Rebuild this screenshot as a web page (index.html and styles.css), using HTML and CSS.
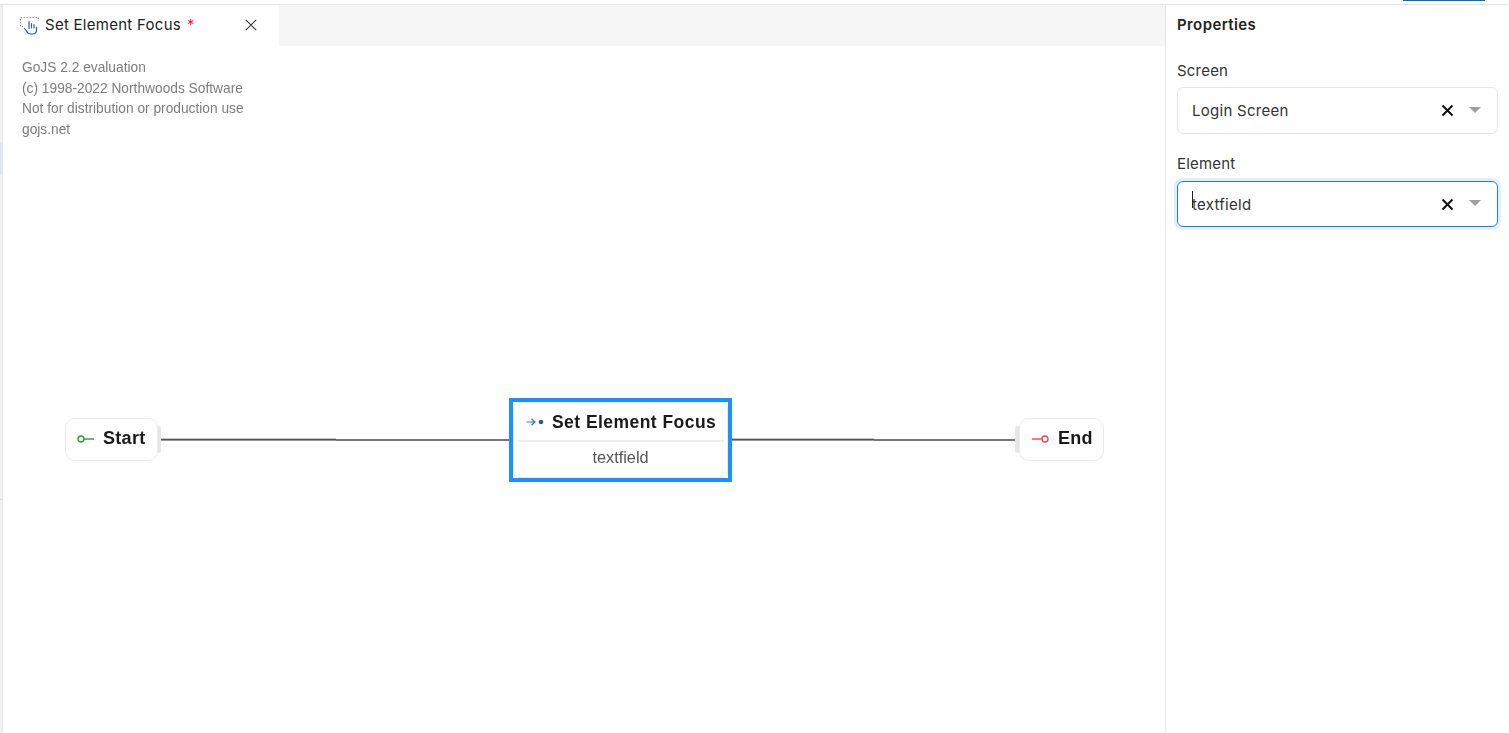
FILE: index.html
```html
<!DOCTYPE html>
<html lang="en">
<head>
    <meta charset="UTF-8">
    <meta name="viewport" content="width=device-width, initial-scale=1.0">
    <title>Set Element Focus</title>
    <link rel="stylesheet" href="styles.css">
</head>
<body>
    <div class="topbar">
        <div class="topbar-button"></div>
    </div>
    <div class="main">
        <div class="side-strip">
            <div class="side-active"></div>
            <div class="side-mark"></div>
        </div>
        <div class="editor">
            <div class="tabs">
                <div class="tab">
                    <svg class="tab-icon" width="20" height="20" viewBox="0 0 20 20" fill="none">
                        <rect x="0.500" y="2.500" width="18" height="9" stroke="#7d9cc0" stroke-width="1" stroke-dasharray="1.500 1.500"/>
                        <rect x="3" y="6" width="16" height="14" fill="#fff"/>
                        <path d="M9 13.500V6.500M11.500 13V8.500M14 13V9.500M16.500 12V15c0 2.500-1.500 4-4 4h-2c-2 0-3-1-4-3L4.500 13.500" stroke="#2a5f9e" stroke-width="1.200" stroke-linecap="round" stroke-linejoin="round"/>
                    </svg>
                    <span class="tab-title">Set Element Focus</span>
                    <span class="tab-star">*</span>
                    <svg class="tab-close" width="12" height="12" viewBox="0 0 12 12" fill="none">
                        <path d="M0.800 0.800L11.200 11.200M11.200 0.800L0.800 11.200" stroke="#333" stroke-width="1.100"/>
                    </svg>
                </div>
            </div>
            <div class="canvas">
                <div class="watermark">
                    <div>GoJS 2.2 evaluation</div>
                    <div>(c) 1998-2022 Northwoods Software</div>
                    <div>Not for distribution or production use</div>
                    <div>gojs.net</div>
                </div>

                <div class="wire wire-dark wire-left-a"></div>
                <div class="wire wire-light wire-left-b"></div>
                <div class="wire wire-dark wire-right-a"></div>
                <div class="wire wire-light wire-right-b"></div>

                <div class="port port-start"></div>
                <div class="node node-start">
                    <svg width="18" height="10" viewBox="0 0 18 10" fill="none">
                        <circle cx="4" cy="5" r="3" stroke="#2ca02c" stroke-width="1.400"/>
                        <path d="M7 5H17" stroke="#2ca02c" stroke-width="1.400"/>
                    </svg>
                    <span>Start</span>
                </div>

                <div class="action">
                    <div class="action-inner">
                        <div class="action-head">
                            <svg width="18" height="10" viewBox="0 0 18 10" fill="none">
                                <path d="M0.500 5H9M5.500 1.800L9 5L5.500 8.200" stroke="#2f7fc8" stroke-width="1.200"/>
                                <circle cx="15" cy="5" r="2.300" fill="#1c5fa8"/>
                            </svg>
                            <span>Set Element Focus</span>
                        </div>
                        <div class="action-body">textfield</div>
                    </div>
                </div>

                <div class="port port-end"></div>
                <div class="node node-end">
                    <svg width="18" height="10" viewBox="0 0 18 10" fill="none">
                        <path d="M0 5H9.500" stroke="#f5404f" stroke-width="1.400"/>
                        <circle cx="13" cy="5" r="3" stroke="#f5404f" stroke-width="1.400"/>
                    </svg>
                    <span>End</span>
                </div>
            </div>
        </div>
        <div class="panel">
            <h2>Properties</h2>
            <div class="field">
                <label>Screen</label>
                <div class="select">
                    <span class="select-value">Login Screen</span>
                    <svg class="select-clear" width="13" height="13" viewBox="0 0 13 13" fill="none">
                        <path d="M1.500 1.500L11.500 11.500M11.500 1.500L1.500 11.500" stroke="#111" stroke-width="2"/>
                    </svg>
                    <span class="select-caret"></span>
                </div>
            </div>
            <div class="field">
                <label>Element</label>
                <div class="select select-focus">
                    <span class="select-value"><i class="cursor"></i>textfield</span>
                    <svg class="select-clear" width="13" height="13" viewBox="0 0 13 13" fill="none">
                        <path d="M1.500 1.500L11.500 11.500M11.500 1.500L1.500 11.500" stroke="#111" stroke-width="2"/>
                    </svg>
                    <span class="select-caret"></span>
                </div>
            </div>
        </div>
    </div>
</body>
</html>
```

FILE: styles.css
```css
/* General Styles */
html, body {
    height: 100%;
}

body {
    margin: 0;
    background-color: #fff;
    color: #1f1f1f;
    font-family: Inter, "Liberation Sans", sans-serif;
    display: flex;
    flex-direction: column;
    overflow: hidden;
}

.topbar {
    height: 4px;
    flex: none;
    border-bottom: 1px solid #e3e3e3;
    display: flex;
    justify-content: flex-end;
    padding-right: 24px;
}

.topbar-button {
    width: 82px;
    height: 1px;
    background-color: #0a6cc9;
}

.main {
    flex: 1;
    display: flex;
    min-height: 0;
}

/* Left strip */
.side-strip {
    width: 2px;
    flex: none;
    background-color: #f1f1f1;
    border-right: 1px solid #e6e6e6;
    display: flex;
    flex-direction: column;
}

.side-active {
    height: 33px;
    margin-top: 137px;
    background-color: #dde8f5;
}

.side-mark {
    height: 1px;
    margin-top: 324px;
    background-color: #d8d8d8;
}

/* Editor */
.editor {
    flex: 1;
    display: flex;
    flex-direction: column;
    min-width: 0;
}

.tabs {
    height: 41px;
    flex: none;
    background-color: #f6f6f6;
    display: flex;
}

.tab {
    width: 276px;
    box-sizing: border-box;
    background-color: #fff;
    display: flex;
    align-items: center;
    padding: 0 22px 2px 17px;
    font-size: 15px;
    letter-spacing: 0.27px;
}

.tab-icon {
    margin-right: 5px;
}

.tab-title {
    color: #222;
}

.tab-star {
    color: #f5222d;
    margin-left: 6px;
}

.tab-close {
    margin-left: auto;
}

/* Diagram canvas */
.canvas {
    flex: 1;
    position: relative;
    font-family: "Liberation Sans", Arial, sans-serif;
}

.watermark {
    position: absolute;
    left: 19px;
    top: 12px;
    font-size: 13.750px;
    line-height: 20.700px;
    color: #7d7d7d;
    filter: blur(0.6px);
    white-space: nowrap;
}

.wire {
    position: absolute;
}

.wire-dark {
    top: 392px;
    height: 3px;
    background: linear-gradient(#c4c4c4 0 33%, #555 33% 66%, #999 66%);
}

.wire-light {
    top: 393px;
    height: 2px;
    background-color: #777;
}

.wire-left-a {
    left: 158px;
    width: 175px;
}

.wire-left-b {
    left: 333px;
    width: 174px;
}

.wire-right-a {
    left: 728px;
    width: 143px;
}

.wire-right-b {
    left: 871px;
    width: 142px;
}

.port {
    position: absolute;
    top: 380px;
    width: 5px;
    height: 27px;
    background-color: #e6e6e6;
}

.port-start {
    left: 153px;
    border-radius: 0 2px 2px 0;
}

.port-end {
    left: 1012px;
    border-radius: 2px 0 0 2px;
}

.node {
    position: absolute;
    top: 372px;
    height: 43px;
    box-sizing: border-box;
    display: flex;
    align-items: center;
    gap: 8px;
    padding-bottom: 2px;
    background-color: #fff;
    border: 1px solid #ebebeb;
    border-radius: 10px;
    font-size: 18px;
    font-weight: 700;
    color: #1a1a1a;
    letter-spacing: 0.3px;
}

.node svg {
    margin-top: 1px;
}

.node-start {
    left: 62px;
    width: 93px;
    padding-left: 11px;
}

.node-end {
    left: 1016px;
    width: 85px;
    padding-left: 12px;
}

.node span, .action-head span, .action-body {
    filter: blur(0.35px);
}

.action {
    position: absolute;
    left: 506px;
    top: 352px;
    width: 223px;
    height: 84px;
    box-sizing: border-box;
    border: 4px solid #1e90ff;
    background-color: #fff;
}

.action-inner {
    height: 100%;
    box-sizing: border-box;
    border: 1px solid #ececec;
    border-radius: 6px;
    padding: 0 3px;
    display: flex;
    flex-direction: column;
}

.action-head {
    height: 39px;
    box-sizing: border-box;
    border-bottom: 2px solid #efefef;
    display: flex;
    align-items: center;
    gap: 8px;
    padding: 1px 0 0 9px;
    font-size: 17.500px;
    font-weight: 700;
    color: #1a1a1a;
    letter-spacing: 0.45px;
    white-space: nowrap;
}

.action-body {
    flex: 1;
    display: flex;
    align-items: center;
    justify-content: center;
    font-size: 16.300px;
    color: #555;
    padding-bottom: 5px;
}

/* Properties panel */
.panel {
    width: 344px;
    flex: none;
    box-sizing: border-box;
    border-left: 1px solid #e6e6e6;
    padding: 0 11px;
}

.panel h2 {
    margin: 0;
    height: 41px;
    line-height: 40px;
    font-size: 15px;
    font-weight: 600;
    color: #222;
    letter-spacing: 0.4px;
}

.field {
    margin-bottom: 6px;
}

.field label {
    display: block;
    height: 41px;
    line-height: 50px;
    font-size: 15px;
    color: #333;
    letter-spacing: 0.2px;
}

.field + .field label {
    line-height: 48px;
}

.select {
    height: 47px;
    box-sizing: border-box;
    border: 1px solid #e6e6e6;
    border-radius: 6px;
    display: flex;
    align-items: center;
    padding: 0 16px 0 14px;
    font-size: 15px;
    color: #333;
    letter-spacing: 0.27px;
}

.select-focus {
    height: 46px;
    border-color: #1a7fe8;
    box-shadow: 0 0 0 3px #e0f0ff;
}

.select-value {
    flex: 1;
    position: relative;
}

.cursor {
    position: absolute;
    left: 0;
    top: -4px;
    width: 1px;
    height: 17px;
    background-color: #222;
}

.select-clear {
    margin-right: 15px;
}

.select-caret {
    width: 0;
    height: 0;
    border-left: 6px solid transparent;
    border-right: 6px solid transparent;
    border-top: 6px solid #a0a0a0;
    margin-bottom: 2px;
}
```
